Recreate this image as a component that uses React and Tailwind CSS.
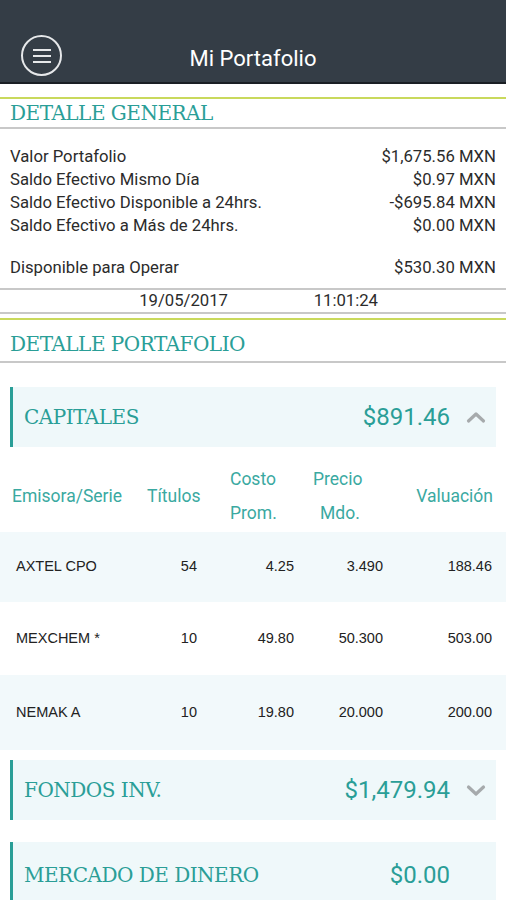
import React from "react";

const body = { fontFamily: 'Roboto, "Liberation Sans", sans-serif' };
const serif = { fontFamily: '"DejaVu Serif", "Liberation Serif", serif' };
const sans = { fontFamily: '"Liberation Sans", Arial, sans-serif' };

const resumen = [
  ["Valor Portafolio", "$1,675.56 MXN"],
  ["Saldo Efectivo Mismo Día", "$0.97 MXN"],
  ["Saldo Efectivo Disponible a 24hrs.", "-$695.84 MXN"],
  ["Saldo Efectivo a Más de 24hrs.", "$0.00 MXN"],
];

const capitales = [
  { emisora: "AXTEL CPO", titulos: "54", costo: "4.25", precio: "3.490", valuacion: "188.46", h: "h-[70px]", bg: "bg-[#f2f9fb]" },
  { emisora: "MEXCHEM *", titulos: "10", costo: "49.80", precio: "50.300", valuacion: "503.00", h: "h-[73px]", bg: "bg-white" },
  { emisora: "NEMAK A", titulos: "10", costo: "19.80", precio: "20.000", valuacion: "200.00", h: "h-[75px]", bg: "bg-[#f2f9fb]" },
];

function SectionTitle({ children, className }) {
  return (
    <div>
      <div className="h-[2px] bg-[#c9d95c]" />
      <div className={"flex items-center px-[10px] text-[20px] leading-none text-[#2a9e97] tracking-[-0.5px] " + className} style={serif}>
        {children}
      </div>
      <div className="h-[2px] bg-[#c8c8c8]" />
    </div>
  );
}

function Chevron({ up }) {
  return (
    <svg width="20" height="14" viewBox="0 0 20 14" className="ml-[16px]">
      <path
        d={up ? "M2.5 11 L10 4 L17.5 11" : "M2.5 4 L10 11 L17.5 4"}
        fill="none"
        stroke="#a6aaac"
        strokeWidth="3.2"
        strokeLinecap="round"
        strokeLinejoin="round"
      />
    </svg>
  );
}

function Grupo({ nombre, monto, chevron, className }) {
  return (
    <div className={"mx-[10px] flex items-center border-l-[3px] border-[#2a9e97] bg-[#eff8fa] pl-[11px] pr-[10px] " + className}>
      <div className="flex-1 text-[20px] text-[#2a9e97] tracking-[-0.5px]" style={serif}>{nombre}</div>
      <div className="text-[24px] text-[#2a9e97]" style={body}>{monto}</div>
      {chevron ? <Chevron up={chevron === "up"} /> : <div className="w-[36px]" />}
    </div>
  );
}

export default function App() {
  return (
    <div className="w-[506px] h-[900px] overflow-hidden bg-white">
      <header className="relative h-[84px] bg-[#343d46] border-b-[2px] border-[#1a1f24]">
        <div className="absolute left-[21px] top-[35px] w-[41px] h-[41px] rounded-full border-[2px] border-[#e6e8ea] flex flex-col items-center justify-center gap-[4px]">
          <span className="block w-[18px] h-[2px] bg-[#e6e8ea]" />
          <span className="block w-[18px] h-[2px] bg-[#e6e8ea]" />
          <span className="block w-[18px] h-[2px] bg-[#e6e8ea]" />
        </div>
        <div className="absolute inset-x-0 top-[45px] text-center text-[22px] leading-[28px] text-white" style={body}>
          Mi Portafolio
        </div>
      </header>

      <div className="pt-[13px]">
        <SectionTitle className="h-[28px]">DETALLE GENERAL</SectionTitle>
      </div>

      <div className="px-[10px] pt-[16px] text-[16.7px] leading-[23px] text-[#2b2b2b]" style={body}>
        {resumen.map(([k, v]) => (
          <div key={k} className="flex justify-between">
            <span>{k}</span>
            <span>{v}</span>
          </div>
        ))}
        <div className="flex justify-between mt-[19px]">
          <span>Disponible para Operar</span>
          <span>$530.30 MXN</span>
        </div>
      </div>

      <div className="mt-[9px] h-[2px] bg-[#c8c8c8]" />
      <div className="flex h-[22px] items-center text-[16.7px] text-[#2b2b2b]" style={body}>
        <span className="w-[228px] text-right">19/05/2017</span>
        <span className="w-[150px] text-right">11:01:24</span>
      </div>
      <div className="h-[2px] bg-[#c8c8c8]" />
      <div className="h-[4px]" />

      <SectionTitle className="h-[41px] pt-[6px]">DETALLE PORTAFOLIO</SectionTitle>

      <Grupo nombre="CAPITALES" monto="$891.46" chevron="up" className="mt-[24px] h-[60px]" />

      <div className="flex items-center h-[85px] pt-[12px] pl-[12px] pr-[13px] text-[17.5px] text-[#3aa9a1] leading-[34px]" style={body}>
        <div className="w-[135px]">Emisora/Serie</div>
        <div className="w-[83px]">Títulos</div>
        <div className="w-[83px]">Costo<br />Prom.</div>
        <div className="w-[80px]">Precio<br /><span className="pl-[7px]">Mdo.</span></div>
        <div className="flex-1 text-right">Valuación</div>
      </div>

      <div className="text-[14.5px] text-[#222]" style={sans}>
        {capitales.map((r) => (
          <div key={r.emisora} className={"flex items-center pl-[16px] pr-[14px] " + r.h + " " + r.bg}>
            <div className="w-[140px]">{r.emisora}</div>
            <div className="w-[41px] text-right">{r.titulos}</div>
            <div className="w-[97px] text-right">{r.costo}</div>
            <div className="w-[89px] text-right">{r.precio}</div>
            <div className="flex-1 text-right">{r.valuacion}</div>
          </div>
        ))}
      </div>

      <Grupo nombre="FONDOS INV." monto="$1,479.94" chevron="down" className="mt-[10px] h-[60px]" />
      <Grupo nombre="MERCADO DE DINERO" monto="$0.00" className="mt-[22px] h-[66px]" />
    </div>
  );
}
